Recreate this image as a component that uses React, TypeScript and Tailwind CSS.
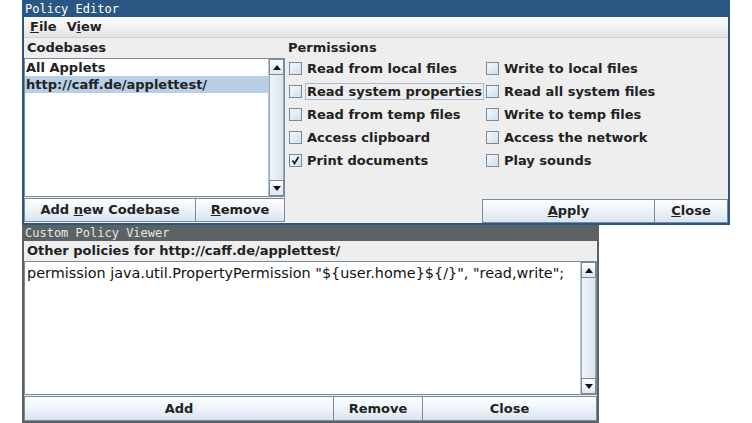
import React from "react";

const F = "font-['DejaVu_Sans',sans-serif]";

function Btn({ children, className = "" }: { children: React.ReactNode; className?: string }) {
  return (
    <div
      className={`h-full flex items-center justify-center border border-[#7a8a99] bg-gradient-to-b from-[#fdfeff] via-[#eef3f9] to-[#d9e4ef] text-[13px] font-bold text-[#222] ${className}`}
    >
      {children}
    </div>
  );
}

function Arrow({ up }: { up: boolean }) {
  return (
    <div className="h-[16px] flex items-center justify-center border border-[#7a8a99] bg-gradient-to-b from-[#fdfeff] to-[#dde7f1]">
      <svg width="8" height="5" viewBox="0 0 8 5">
        {up ? <path d="M0 5 L4 0 L8 5 Z" fill="#111" /> : <path d="M0 0 L8 0 L4 5 Z" fill="#111" />}
      </svg>
    </div>
  );
}

function Scrollbar() {
  return (
    <div className="w-[16px] h-full flex flex-col bg-[#eeeeee] border-l border-[#b8c6d3]">
      <Arrow up />
      <div className="flex-1 border-x border-[#9aabbb] bg-gradient-to-r from-[#eef3f8] to-[#dbe5ef]" />
      <Arrow up={false} />
    </div>
  );
}

function Check({ label, checked = false, focus = false }: { label: string; checked?: boolean; focus?: boolean }) {
  return (
    <div className="flex items-center h-[23px]">
      <div className="w-[13px] h-[13px] ml-[1px] border border-[#7a8a99] bg-gradient-to-br from-[#f4f8fb] to-[#d3dfeb] flex items-center justify-center">
        {checked && (
          <svg width="9" height="9" viewBox="0 0 9 9">
            <path d="M1.5 4.5 L3.5 7.5 L7.5 1" stroke="#111" strokeWidth="1.6" fill="none" />
          </svg>
        )}
      </div>
      <span
        className={`ml-[3px] px-[1px] h-[17px] flex items-center border ${focus ? "border-[#a3bdd6]" : "border-transparent"} text-[13px] font-bold text-[#222] whitespace-nowrap`}
      >
        {label}
      </span>
    </div>
  );
}

export default function App() {
  return (
    <div className={`w-[752px] h-[423px] bg-white overflow-hidden ${F}`}>
      {/* Policy Editor window */}
      <div className="ml-[22px] w-[708px] h-[225px] flex flex-col bg-[#2a5781] border-x-2 border-b-2 border-[#2a5781]">
        <div className="h-[17px] flex items-center pl-[1px] text-white text-[12px] font-['DejaVu_Sans_Mono',monospace]">
          Policy Editor
        </div>
        <div className="h-[21px] flex items-center pl-[6px] gap-[10px] bg-gradient-to-b from-[#fdfdfd] to-[#e4e4e4] border-b border-[#d0d0d0] text-[13px] font-bold text-[#222]">
          <span>
            <u>F</u>ile
          </span>
          <span>
            V<u>i</u>ew
          </span>
        </div>
        <div className="flex-1 flex bg-[#eeeeee]">
          <div className="w-[261px] flex flex-col">
            <div className="h-[20px] flex items-center pl-[3px] text-[13px] font-bold text-[#222]">Codebases</div>
            <div className="h-[139px] flex border border-[#7a8a99] bg-white">
              <div className="flex-1 flex flex-col text-[13px] font-bold text-[#222]">
                <div className="h-[17px] flex items-center pl-[1px]">All Applets</div>
                <div className="h-[17px] flex items-center pl-[1px] bg-[#b8cfe5]">http://caff.de/applettest/</div>
              </div>
              <Scrollbar />
            </div>
            <div className="h-[24px] mt-[1px] flex">
              <Btn className="w-[172px]">
                Add&nbsp;<u>n</u>ew Codebase
              </Btn>
              <Btn className="flex-1 border-l-0">
                <u>R</u>emove
              </Btn>
            </div>
          </div>
          <div className="flex-1 flex flex-col">
            <div className="h-[20px] flex items-center pl-[3px] text-[13px] font-bold text-[#222]">Permissions</div>
            <div className="grid grid-cols-[197px_auto] pl-[3px] mt-[-1px]">
              <Check label="Read from local files" />
              <Check label="Write to local files" />
              <Check label="Read system properties" focus />
              <Check label="Read all system files" />
              <Check label="Read from temp files" />
              <Check label="Write to temp files" />
              <Check label="Access clipboard" />
              <Check label="Access the network" />
              <Check label="Print documents" checked />
              <Check label="Play sounds" />
            </div>
            <div className="flex-1" />
            <div className="h-[24px] mt-[1px] flex justify-end">
              <Btn className="w-[173px]">
                <span>
                  <u>A</u>pply
                </span>
              </Btn>
              <Btn className="w-[73px] border-l-0">
                <span>
                  <u>C</u>lose
                </span>
              </Btn>
            </div>
          </div>
        </div>
      </div>

      {/* Custom Policy Viewer window */}
      <div className="ml-[22px] w-[577px] h-[198px] flex flex-col bg-[#5c6164] border-x-2 border-b-2 border-[#5c6164]">
        <div className="h-[16px] flex items-center pl-[1px] text-[#e6e6e6] text-[12px] font-['DejaVu_Sans_Mono',monospace]">
          Custom Policy Viewer
        </div>
        <div className="flex-1 flex flex-col bg-[#eeeeee]">
          <div className="h-[20px] flex items-center pl-[3px] text-[13px] font-bold text-[#222]">
            Other policies for http://caff.de/applettest/
          </div>
          <div className="h-[134px] flex border border-[#7a8a99] bg-white">
            <div className="flex-1 pl-[2px] pt-[2px] text-[14.4px] leading-[18px] text-[#111] whitespace-nowrap">
              permission java.util.PropertyPermission "$&#123;user.home&#125;$&#123;/&#125;", "read,write";
            </div>
            <Scrollbar />
          </div>
          <div className="h-[25px] mt-[1px] flex">
            <Btn className="w-[310px]">Add</Btn>
            <Btn className="w-[89px] border-l-0">Remove</Btn>
            <Btn className="flex-1 border-l-0">Close</Btn>
          </div>
        </div>
      </div>
    </div>
  );
}
